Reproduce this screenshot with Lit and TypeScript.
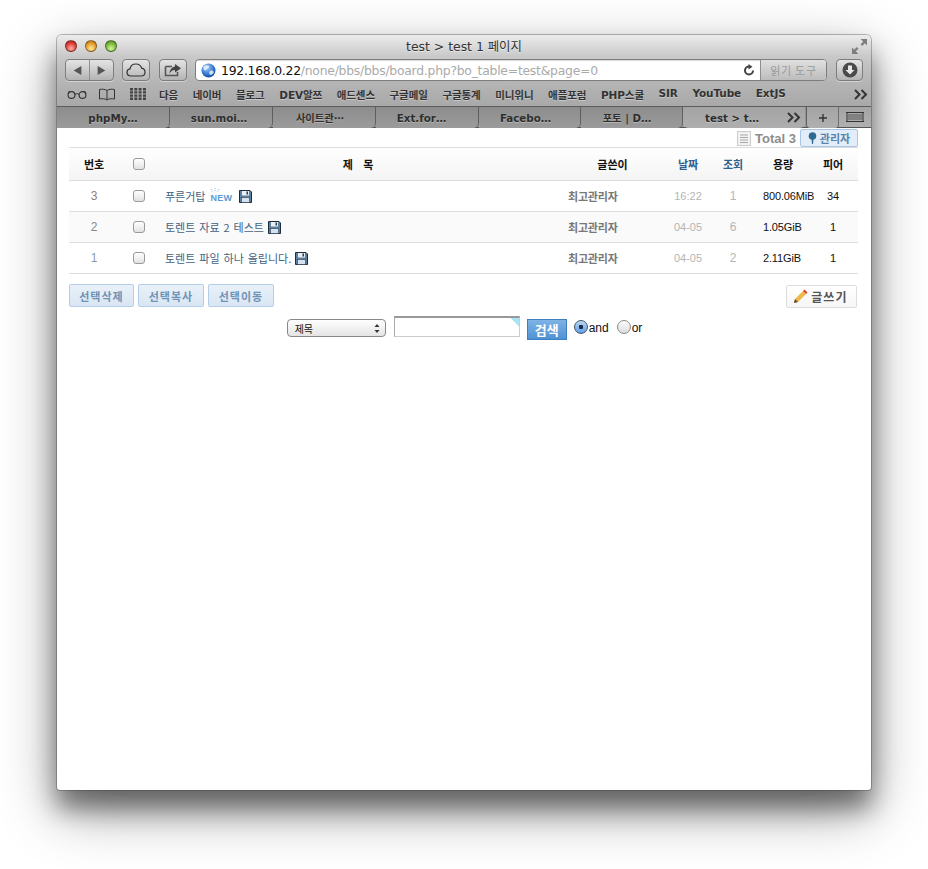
import { LitElement, html, css } from "lit";
import { customElement } from "lit/decorators.js";

const floppy = html`<svg class="floppy" viewBox="0 0 13 13"><path d="M.5.500H11L12.500 2V12.500H.5Z" fill="#5d7f9f" stroke="#1f2c3a"/><rect x="3" y="1" width="7" height="4.500" fill="#e8eff6"/><rect x="7.500" y="1.500" width="1.500" height="3" fill="#2c3c50"/><rect x="2.500" y="7.500" width="8" height="5" fill="#d5e2ef" stroke="#2c3c50" stroke-width=".6"/></svg>`;

const bookmarks = ["다음","네이버","블로그","DEV알쯔","애드센스","구글메일","구글통계","미니위니","애플포럼","PHP스쿨","SIR","YouTube","ExtJS"];
const tabs = [
  ["phpMy…", "t1"], ["sun.moi…", "t2 p4"], ["사이트관⋯", "t2 p8"], ["Ext.for…", "t2 p11"], ["Facebo…", "t3 p8"], ["포토 | D…", "t3 p9"],
];
const rows = [
  { n: "3", nc: "n3", title: "푸른거탑", isNew: true, date: "16:22", hits: "1", size: "800.06MiB", peers: "34" },
  { n: "2", nc: "n2", title: "토렌트 자료 2 테스트", isNew: false, date: "04-05", hits: "6", size: "1.05GiB", peers: "1" },
  { n: "1", nc: "n1", title: "토렌트 파일 하나 올립니다.", isNew: false, date: "04-05", hits: "2", size: "2.11GiB", peers: "1" },
];

const chevrons = html`<svg class="chev" viewBox="0 0 15 11"><path d="M1 1l4.500 4.500L1 10M7.500 1L12 5.500 7.500 10" fill="none" stroke="#333" stroke-width="2"/></svg>`;

@customElement("app-root")
export class AppRoot extends LitElement {
  static styles = css`
    :host { display: block; padding: 35px 57px 0; height: 869px; box-sizing: border-box; background: #fff; font-family: "DejaVu Sans", "Noto Sans CJK KR", sans-serif; overflow: hidden; }
    .win { width: 814px; height: 755px; background: #fff; border-radius: 5px 5px 3px 3px; box-shadow: 0 0 0 1px rgba(60,60,60,.35), 0 18px 24px rgba(0,0,0,.42), 0 20px 55px rgba(0,0,0,.42); display: flex; flex-direction: column; }
    .chrome { height: 71px; border-radius: 5px 5px 0 0; background: linear-gradient(#ececec, #c9c9c9 30%, #b4b4b4 68%, #a9a9a9); display: flex; flex-direction: column; flex: none; }
    .titlebar { height: 23px; display: flex; align-items: center; padding: 0 8px 1px; box-sizing: border-box; flex: none; }
    .lights { display: flex; gap: 8px; }
    .light { width: 12px; height: 12px; border-radius: 50%; border: 1px solid rgba(0,0,0,.4); box-sizing: border-box; }
    .red { background: radial-gradient(circle at 50% 75%, #ffb0a8, #e0453c 55%, #a01c18); }
    .yellow { background: radial-gradient(circle at 50% 75%, #ffe9a0, #e9a02e 55%, #a86a10); }
    .green { background: radial-gradient(circle at 50% 75%, #d4f5a0, #7fba3e 55%, #4a8420); }
    .title { flex: 1; text-align: center; font-size: 12.4px; color: #333; text-shadow: 0 1px 0 rgba(255,255,255,.5); margin-right: 41px; }
    .resize { width: 15px; height: 15px; margin-right: -4px; }
    .toolbar { height: 24px; display: flex; align-items: center; padding: 0 8px; flex: none; }
    .tb { height: 22px; border: 1px solid #7d7d7d; border-radius: 4px; box-sizing: border-box; background: linear-gradient(#e4e4e4, #b4b4b4); display: flex; align-items: center; justify-content: center; box-shadow: 0 1px 0 rgba(255,255,255,.4); flex: none; }
    .nav { width: 49px; }
    .nav svg { flex: 1; height: 11px; }
    .nav .sep { width: 1px; height: 100%; background: #8f8f8f; }
    .cloud { width: 28px; margin-left: 8px; }
    .share { width: 28px; margin-left: 9px; }
    .addr { margin-left: 8px; width: 632px; height: 22px; display: flex; border: 1px solid #7d7d7d; border-radius: 4px; box-sizing: border-box; background: #fff; overflow: hidden; flex: none; align-items: stretch; }
    .url { flex: 1; display: flex; align-items: center; padding-left: 5px; font-size: 12.4px; letter-spacing: -.02em; color: #aaa; white-space: nowrap; box-shadow: inset 0 1px 1px rgba(0,0,0,.15); }
    .url b { font-weight: 400; color: #111; }
    .globe { width: 15px; height: 15px; margin-right: 5px; flex: none; }
    .reload { width: 12px; height: 12px; margin-left: auto; margin-right: 5px; flex: none; }
    .reader { width: 65px; flex: none; border-left: 1px solid #8f8f8f; background: linear-gradient(#e0e0e0, #bcbcbc); color: #999; font-size: 11px; display: flex; align-items: center; justify-content: center; font-family: "Noto Sans CJK KR", sans-serif; letter-spacing: .7px; }
    .dl { width: 27px; margin-left: 9px; }
    .bm { height: 24px; display: flex; align-items: center; padding: 0 2px 0 10px; font-size: 10.5px; font-weight: 700; color: #333; text-shadow: 0 1px 0 rgba(255,255,255,.35); flex: none; }
    .bm svg { flex: none; }
    .book { margin-left: 11px; }
    .apps { margin-left: 14px; }
    .bmi { display: flex; gap: 14.6px; margin-left: 13px; white-space: nowrap; letter-spacing: -.1px; }
    .bm .chev { margin-left: auto; width: 15px; height: 11px; }
    .tabs { height: 22px; flex: none; display: flex; background: linear-gradient(#8b8b8b, #9c9c9c); border-top: 1px solid #5d5d5d; box-sizing: border-box; border-bottom: 1px solid #555; font-size: 10.3px; font-weight: 700; color: #2e2e2e; text-shadow: 0 1px 0 rgba(255,255,255,.3); }
    .tab { display: flex; align-items: center; justify-content: center; box-sizing: border-box; border-right: 1px solid #5f5f5f; border-bottom-right-radius: 5px; margin-bottom: -1px; white-space: nowrap; background: linear-gradient(#8d8d8d, #9b9b9b); }
    .t1 { width: 113px; } .t2 { width: 103px; } .t3 { width: 102px; }
    .p4 { padding-right: 4px; } .p8 { padding-right: 8px; } .p9 { padding-right: 9px; } .p11 { padding-right: 11px; }
    .tab.active { width: 122px; background: linear-gradient(#a4a4a4, #aeaeae); border-right: 0; border-bottom-left-radius: 5px; position: relative; padding-right: 24px; }
    .tab.active .chev { position: absolute; right: 3px; top: 5px; width: 15px; height: 11px; }
    .plus { width: 33px; background: linear-gradient(#a4a4a4, #b0b0b0); border-left: 1px solid #5f5f5f; border-right: 1px solid #6f6f6f; border-bottom-left-radius: 4px; border-bottom-right-radius: 4px; margin-left: 1px; margin-bottom: -1px; display: flex; align-items: center; justify-content: center; box-sizing: border-box; }
    .allt { flex: 1; display: flex; align-items: center; justify-content: center; background: linear-gradient(#a4a4a4, #b0b0b0); }
    .content { flex: 1; padding: 0 13px 0 12px; color: #111; font-family: "Noto Sans CJK KR", sans-serif; }
    .top { height: 19px; display: flex; justify-content: flex-end; align-items: center; gap: 4px; padding-top: 1px; box-sizing: border-box; }
    .doc { width: 14px; height: 15px; }
    .total { font-family: "Liberation Sans", sans-serif; font-weight: 700; font-size: 13px; color: #8d8d8d; }
    .admin { width: 58px; height: 18px; box-sizing: border-box; border: 1px solid #a9c6e6; background: #e3edf7; border-radius: 2px; display: flex; align-items: center; justify-content: center; gap: 3px; font-size: 11px; font-weight: 700; color: #5a86ad; }
    .admin svg { width: 9px; height: 12px; }
    .grid { display: grid; grid-template-columns: 50px 40px 398px 111px 40px 50px 50px 50px; align-items: center; }
    .head { height: 34px; border-top: 1px solid #ddd; border-bottom: 1px solid #ddd; background: linear-gradient(#fff, #f4f4f4); box-sizing: border-box; font-size: 11px; font-weight: 700; text-align: center; color: #111; }
    .row { height: 31px; border-bottom: 1px solid #ddd; box-sizing: border-box; text-align: center; font-size: 11px; }
    .row.alt { background: #fafafa; }
    .blue { color: #2f5f8c; }
    .wide { word-spacing: 8px; }
    .chk { appearance: none; width: 12px; height: 12px; margin: 0; border: 1px solid #9a9a9a; border-radius: 3px; background: linear-gradient(#fff, #e2e2e2); box-sizing: border-box; display: block; justify-self: center; }
    .num { font-family: "Liberation Sans", sans-serif; font-size: 12px; }
    .n3 { color: #8f7f70; } .n2 { color: #888; } .n1 { color: #8aa0b0; }
    .sub { text-align: left; padding-left: 6px; color: #3f6384; display: flex; align-items: center; gap: 4px; word-spacing: 1.5px; }
    .floppy { width: 13px; height: 13px; flex: none; }
    .new { position: relative; font: 700 9px "Liberation Sans", sans-serif; color: #5b9bd0; padding-top: 3px; letter-spacing: .3px; width: 24px; margin: 0 1px; }
    .new svg { position: absolute; left: 0; top: -2px; width: 10px; height: 6px; }
    .writer { text-align: left; padding-left: 11px; font-weight: 700; color: #777; font-size: 11px; letter-spacing: -.2px; }
    .date { font-family: "Liberation Sans", sans-serif; color: #b5b5b5; font-size: 11px; }
    .hits { font-family: "Liberation Sans", sans-serif; color: #b5b5b5; font-size: 12px; }
    .size, .peer { font-family: "Liberation Sans", sans-serif; color: #111; font-size: 11px; letter-spacing: -.15px; }
    .size { text-align: left; padding-left: 5px; }
    .actions { display: flex; align-items: flex-start; gap: 4px; padding-top: 10px; height: 24px; }
    .btn { height: 23px; width: 66px; box-sizing: border-box; border: 1px solid #b4cee9; border-radius: 2px; background: linear-gradient(#e9f1f9, #d9e6f3); color: #6f93b4; font-size: 11px; font-weight: 700; letter-spacing: 1px; display: flex; align-items: center; justify-content: center; font-family: inherit; padding: 0; }
    .btn:first-child { width: 65px; }
    .write { margin: 1px 1px 0 auto; width: 71px; height: 23px; box-sizing: border-box; border: 1px solid #ddd; border-radius: 2px; background: linear-gradient(#fff, #f6f6f6); display: flex; align-items: center; justify-content: center; gap: 3px; font-size: 12px; font-weight: 700; letter-spacing: 1.2px; color: #555; padding-right: 2px; }
    .write svg { width: 15px; height: 15px; }
    .search { display: flex; justify-content: center; align-items: flex-start; margin-top: 8px; padding-left: 2px; font-size: 11px; height: 25px; }
    .select { margin-top: 3px; width: 99px; height: 18px; box-sizing: border-box; border: 1px solid #888; border-radius: 4px; background: linear-gradient(#fff, #e4e4e4); display: flex; align-items: center; justify-content: space-between; padding: 0 5px 0 7px; font-size: 10px; color: #111; }
    .select svg { width: 6px; height: 9px; }
    .field { width: 126px; height: 21px; margin-left: 8px; box-sizing: border-box; border: 1px solid #ccc; border-top: 2px solid #999; border-left-color: #aaa; background: linear-gradient(225deg, #a8e4f4 6px, #fff 6px); }
    .go { margin: 3px 0 0 7px; width: 40px; height: 21px; box-sizing: border-box; border: 1px solid #3d7fc0; background: linear-gradient(#7fb3e4, #4f92d4); color: #fff; font-weight: 700; font-size: 13px; display: flex; align-items: center; justify-content: center; }
    .radio { appearance: none; margin: 4px 1px 0 8px; width: 14px; height: 14px; border: 1px solid #8a8a8a; border-radius: 50%; box-sizing: border-box; background: linear-gradient(#fdfdfd, #dcdcdc); display: block; }
    .radio.on { margin-left: 7px; background: radial-gradient(circle, #1a2a44 2px, transparent 2.500px), linear-gradient(#bcd6f4, #5f9fe8); border-color: #456; }
    .lab { margin-top: 2px; font: 12px/20px "Liberation Sans", sans-serif; color: #111; }
  `;

  render() {
    return html`<div class="win">
      <div class="chrome">
        <div class="titlebar">
          <div class="lights"><span class="light red"></span><span class="light yellow"></span><span class="light green"></span></div>
          <div class="title">test &gt; test 1 페이지</div>
          <svg class="resize" viewBox="0 0 14 14" fill="#7d7d7d"><path d="M8 0h6v6l-2-2-2.500 2.500-1.500-1.500L10.500 2.500zM6 14H0V8l2 2 2.500-2.500 1.500 1.500L3.500 11.500z"/></svg>
        </div>
        <div class="toolbar">
          <div class="tb nav">
            <svg viewBox="0 0 10 10"><path d="M8.500 1v8L1.500 5z" fill="#555"/></svg><span class="sep"></span>
            <svg viewBox="0 0 10 10"><path d="M1.500 1v8l7-4z" fill="#555"/></svg>
          </div>
          <div class="tb cloud"><svg width="20" height="14" viewBox="0 0 20 14"><path d="M5 13C2.500 13 1 11.300 1 9.300 1 7.500 2.300 6.100 4 5.900 4.500 3 7 1 10 1c2.800 0 4.900 1.700 5.600 4.200C17.600 5.500 19 7.200 19 9.200 19 11.400 17.400 13 15 13Z" fill="none" stroke="#333" stroke-width="1.200"/></svg></div>
          <div class="tb share"><svg width="18" height="14" viewBox="0 0 18 14"><path d="M1.500 3.500H8M13.500 9v3.500H1.500V3.500" fill="none" stroke="#555" stroke-width="1.600"/><path d="M11 1l6 4.200L11 9.500V7C8.500 7 7 8 5.500 10.500 5.800 6.500 8 4 11 3.500Z" fill="#444"/></svg></div>
          <div class="addr">
            <div class="url">
              <svg class="globe" viewBox="0 0 15 15"><defs><radialGradient id="g" cx=".4" cy=".3" r=".8"><stop offset="0" stop-color="#a8d0f8"/><stop offset=".6" stop-color="#2d74d0"/><stop offset="1" stop-color="#123f90"/></radialGradient></defs><circle cx="7.500" cy="7.500" r="7" fill="url(#g)"/><path d="M3 3c2-1 4-1 5 0s-1 2-2 3-2 2-3 1-1-3 0-4zM9 8c2-1 3 0 4 1-1 2-2 3-4 3-1-1-1-3 0-4z" fill="#e8f2fa" opacity=".85"/></svg>
              <b>192.168.0.22</b>/none/bbs/bbs/board.php?bo_table=test&amp;page=0
              <svg class="reload" viewBox="0 0 12 12"><path d="M10 6.500A4 4 0 1 1 6 2.500" fill="none" stroke="#444" stroke-width="2"/><path d="M5.500 0l4 2.700-4 2.700z" fill="#444"/></svg>
            </div>
            <div class="reader">읽기 도구</div>
          </div>
          <div class="tb dl"><svg width="16" height="16" viewBox="0 0 16 16"><circle cx="8" cy="8" r="7.500" fill="#4a4a4a"/><path d="M6 3.500h4V8h2.500L8 12.500 3.500 8H6z" fill="#e8e8e8"/></svg></div>
        </div>
        <div class="bm">
          <svg width="20" height="10" viewBox="0 0 20 10"><g fill="none" stroke="#333" stroke-width="1.100"><circle cx="4.500" cy="6" r="3.400"/><circle cx="15.500" cy="6" r="3.400"/><path d="M8 5.500c1-1 3-1 4 0M1 5l1.500-3M19 5l-1.500-3"/></g></svg>
          <svg class="book" width="18" height="13" viewBox="0 0 18 13"><path d="M9 2.500C7 1 4 1 1.500 1.500V11C4 10.500 7 10.500 9 12c2-1.500 5-1.500 7.500-1V1.500C14 1 11 1 9 2.500ZM9 2.500V12" fill="none" stroke="#333"/></svg>
          <svg class="apps" width="16" height="12" viewBox="0 0 16 12" fill="#444"><path d="M0 0h3v2.400H0zM4.300 0h3v2.400h-3zM8.600 0h3v2.400h-3zM13 0h3v2.400h-3zM0 3.200h3v2.400H0zM4.300 3.200h3v2.400h-3zM8.600 3.200h3v2.400h-3zM13 3.200h3v2.400h-3zM0 6.400h3v2.400H0zM4.300 6.400h3v2.400h-3zM8.600 6.400h3v2.400h-3zM13 6.400h3v2.400h-3zM0 9.600h3V12H0zM4.300 9.600h3V12h-3zM8.600 9.600h3V12h-3zM13 9.600h3V12h-3z"/></svg>
          <div class="bmi">${bookmarks.map((b) => html`<span>${b}</span>`)}</div>
          ${chevrons}
        </div>
      </div>
      <div class="tabs">
        ${tabs.map(([t, c]) => html`<div class="tab ${c}">${t}</div>`)}
        <div class="tab active">test &gt; t…${chevrons}</div>
        <div class="plus"><svg width="8" height="8" viewBox="0 0 8 8"><path d="M4 0v8M0 4h8" stroke="#333" stroke-width="1.400"/></svg></div>
        <div class="allt"><svg width="18" height="10" viewBox="0 0 18 10"><path d="M0 .5h18M0 9.500h18M1 1v8M17 1v8" stroke="#333"/><path d="M3 2v6M5 2v6M7 2v6M9 2v6M11 2v6M13 2v6M15 2v6" stroke="#666" stroke-width="1.200"/></svg></div>
      </div>
      <div class="content">
        <div class="top">
          <svg class="doc" viewBox="0 0 14 15"><rect x=".5" y=".5" width="13" height="14" fill="#f2f2f2" stroke="#ccc"/><path d="M3 4h8M3 6.500h8M3 9h8M3 11.500h8" stroke="#aaa"/></svg>
          <span class="total">Total 3</span>
          <div class="admin"><svg viewBox="0 0 9 12"><circle cx="4.500" cy="4" r="3.800" fill="#2f6a92"/><path d="M3.500 7h2L5 12H4z" fill="#2f6a92"/></svg>관리자</div>
        </div>
        <div class="grid head">
          <span>번호</span><input class="chk" type="checkbox" /><span class="wide">제 목</span><span>글쓴이</span>
          <span class="blue">날짜</span><span class="blue">조회</span><span>용량</span><span>피어</span>
        </div>
        ${rows.map((r, i) => html`<div class="grid row ${i === 1 ? "alt" : ""}">
          <span class="num ${r.nc}">${r.n}</span>
          <input class="chk" type="checkbox" />
          <div class="sub"><span>${r.title}</span>${r.isNew ? html`<span class="new"><svg viewBox="0 0 10 6"><path d="M1 1l1.500 3M5 0v4M9 1L7.500 4" stroke="#8fb9dd" stroke-dasharray="1 1"/></svg>NEW</span>` : ""}${floppy}</div>
          <span class="writer">최고관리자</span>
          <span class="date">${r.date}</span><span class="hits">${r.hits}</span><span class="size">${r.size}</span><span class="peer">${r.peers}</span>
        </div>`)}
        <div class="actions">
          <button class="btn">선택삭제</button><button class="btn">선택복사</button><button class="btn">선택이동</button>
          <div class="write"><svg viewBox="0 0 15 15"><path d="M1 14l1-4 8-8 3 3-8 8z" fill="#f0b848"/><path d="M10 2l1.500-1.500 3 3L13 5z" fill="#d84030"/><path d="M1 14l1-4 3 3z" fill="#5a4a3a"/></svg>글쓰기</div>
        </div>
        <div class="search">
          <div class="select"><span>제목</span><svg viewBox="0 0 6 9"><path d="M3 0l2.500 3h-5zM3 9L.5 6h5z" fill="#333"/></svg></div>
          <div class="field"></div>
          <div class="go">검색</div>
          <input class="radio on" type="radio" name="op" /><span class="lab">and</span>
          <input class="radio" type="radio" name="op" /><span class="lab">or</span>
        </div>
      </div>
    </div>`;
  }
}
